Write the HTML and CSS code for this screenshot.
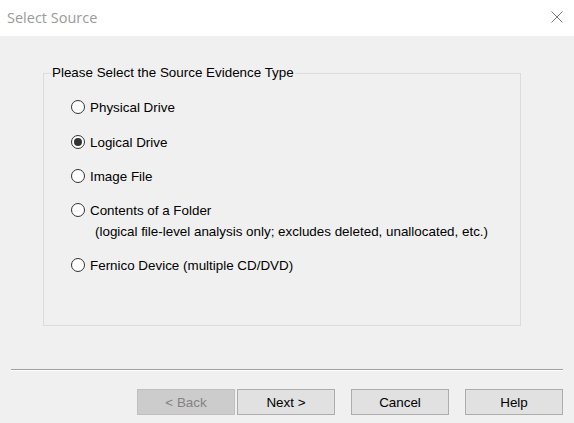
FILE: index.html
```html
<!DOCTYPE html>
<html>
<head>
<meta charset="utf-8">
<link rel="stylesheet" href="styles.css">
</head>
<body>
<div class="dialog">
  <div class="titlebar">
    <span class="title">Select Source</span>
    <svg class="close" width="12" height="12" viewBox="0 0 12 12"><path d="M0.5 0.5 L11.5 11.5 M11.5 0.5 L0.5 11.5" stroke="#7a7a7a" stroke-width="1" fill="none"/></svg>
  </div>
  <div class="content">
    <fieldset class="group">
      <legend class="legend">Please Select the Source Evidence Type</legend>
      <div class="options">
        <div class="opt opt-first"><span class="radio"></span><span>Physical Drive</span></div>
        <div class="opt opt-2"><span class="radio checked"></span><span>Logical Drive</span></div>
        <div class="opt"><span class="radio"></span><span>Image File</span></div>
        <div class="opt"><span class="radio"></span><span>Contents of a Folder</span></div>
        <div class="note">(logical file-level analysis only; excludes deleted, unallocated, etc.)</div>
        <div class="opt opt-last"><span class="radio"></span><span>Fernico Device (multiple CD/DVD)</span></div>
      </div>
    </fieldset>
  </div>
  <div class="separator"></div>
  <div class="buttons">
    <button class="btn disabled">&lt; Back</button>
    <button class="btn next">Next &gt;</button>
    <button class="btn cancel">Cancel</button>
    <button class="btn help">Help</button>
  </div>
</div>
</body>
</html>
```
FILE: styles.css
```css
* { box-sizing: border-box; }
html, body { margin: 0; padding: 0; }
body {
  width: 574px;
  height: 423px;
  background: #f0f0f0;
  font-family: "Liberation Sans", Arial, sans-serif;
  font-size: 13.4px;
  color: #000;
  overflow: hidden;
}
.dialog {
  display: flex;
  flex-direction: column;
  height: 423px;
}
.titlebar {
  height: 36px;
  background: #ffffff;
  display: flex;
  align-items: center;
  justify-content: space-between;
  padding: 0 11px 0 7px;
}
.title {
  font-family: "Open Sans", "Noto Sans", sans-serif;
  font-size: 14.5px;
  color: #9a9a9a;
  margin-top: -1px;
}
.close { display: block; margin-top: -2px; }
.content {
  padding: 29px 0 0 43px;
}
.group {
  margin: 0;
  width: 478px;
  height: 261px;
  border: 1px solid #dcdcdc;
  padding: 0;
  min-width: 0;
}
.legend {
  padding: 0 1px;
  margin-left: 7px;
  line-height: 16px;
}
.options {
  display: flex;
  flex-direction: column;
  padding-left: 27px;
}
.opt {
  display: flex;
  align-items: center;
  height: 20px;
  margin-top: 14px;
}
.opt-first { margin-top: 16px; }
.opt-2 { margin-top: 15px; }
.opt-last { margin-top: 13px; }
.radio {
  width: 14px;
  height: 14px;
  border: 1px solid #333333;
  border-radius: 50%;
  background: #ffffff;
  margin-right: 5px;
  position: relative;
  flex: none;
}
.radio.checked::after {
  content: "";
  position: absolute;
  left: 2px;
  top: 2px;
  width: 8px;
  height: 8px;
  border-radius: 50%;
  background: #333333;
}
.note {
  height: 20px;
  line-height: 20px;
  margin-top: 2px;
  padding-left: 24px;
}
.separator {
  margin: 43px 11px 0 11px;
  height: 1px;
  background: #a0a0a0;
  border-bottom: 1px solid #ffffff;
  box-sizing: content-box;
}
.buttons {
  display: flex;
  justify-content: flex-end;
  padding: 18px 11px 0 0;
}
.btn {
  width: 98px;
  height: 26px;
  border: 1px solid #adadad;
  background: #e1e1e1;
  font-family: "Liberation Sans", Arial, sans-serif;
  font-size: 13.4px;
  color: #000;
  padding: 0;
  margin: 0;
}
.btn.disabled {
  background: #cccccc;
  border-color: #bfbfbf;
  color: #838383;
}
.btn.next { margin-left: 2px; }
.btn.cancel { margin-left: 16px; }
.btn.help { margin-left: 16px; }
```
